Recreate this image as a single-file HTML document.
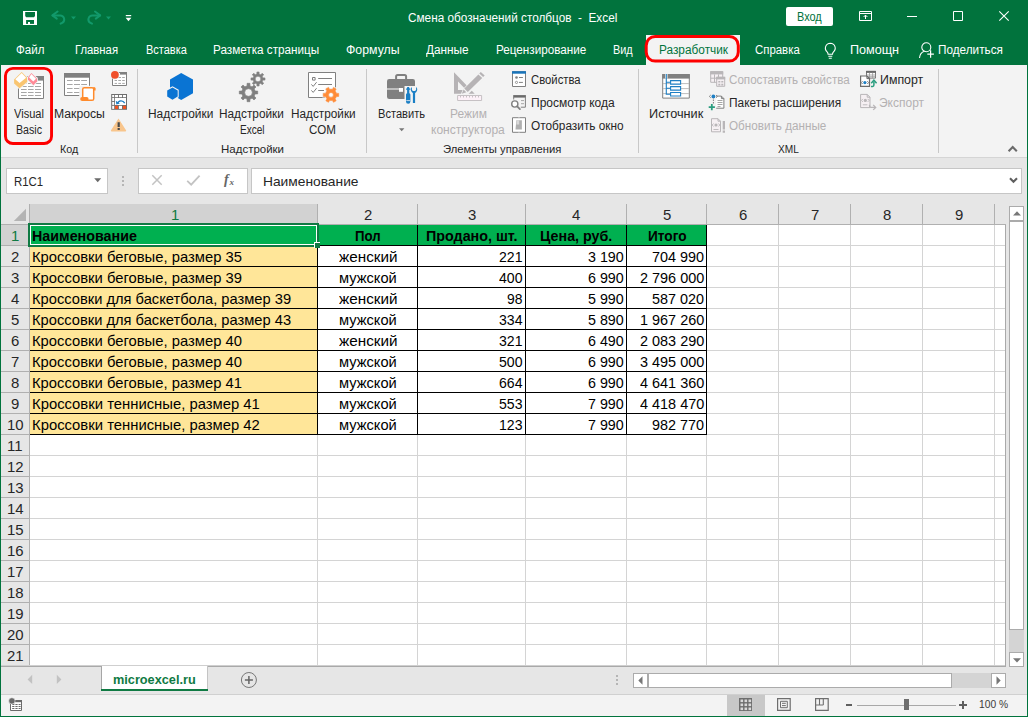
<!DOCTYPE html>
<html lang="ru"><head><meta charset="utf-8"><title>Смена обозначений столбцов - Excel</title>
<style>
html,body{margin:0;padding:0;background:#e6e6e6;overflow:hidden}
#app{position:relative;width:1028px;height:717px;overflow:hidden;background:#e6e6e6;font-family:"Liberation Sans",sans-serif}
#app div,#app svg,#app span.t{position:absolute}
#app span.t{white-space:pre;transform-origin:0 0;display:block}
#app svg{overflow:visible}
</style></head><body><div id="app">
<div style="left:0px;top:0px;width:1028px;height:65px;background:#01733d;"></div>
<div style="left:646px;top:35px;width:94px;height:30px;background:#f3f3f3;"></div>
<div style="left:1px;top:65px;width:1026px;height:92px;background:#f3f3f3;"></div>
<div style="left:1px;top:157px;width:1026px;height:1px;background:#d5d5d5;"></div>
<div style="left:0px;top:65px;width:1px;height:652px;background:#01733d;"></div>
<div style="left:1027px;top:65px;width:1px;height:652px;background:#01733d;"></div>
<div style="left:0px;top:716px;width:1028px;height:1px;background:#01733d;"></div>
<svg style="left:23px;top:11px" width="14" height="14" viewBox="0 0 14 14"><path d="M0 0h14v14h-14z" fill="#fff"/>
<path d="M2.200 1h9.800v4l-1 1.200h-7.800l-1-1.200z" fill="#01733d"/><path d="M3.100 9h7.900v3.900h-7.900z" fill="#01733d"/><path d="M5 11h2v2h-2z" fill="#fff"/></svg>
<svg style="left:50px;top:10px" width="18" height="16" viewBox="0 0 18 16"><path d="M2.600 5.400H10.300a4 4 0 0 1 2.300 7.200L10.600 13.600" fill="none" stroke="#12996b" stroke-width="2" stroke-linecap="round" stroke-linejoin="round"/><path d="M7.600 1.500L2.400 5.400L6.800 8.600" fill="none" stroke="#12996b" stroke-width="2" stroke-linecap="round" stroke-linejoin="round"/></svg>
<svg style="left:71px;top:15.5px" width="6" height="4" viewBox="0 0 6 4"><path d="M0 0.400h5L2.500 3.500z" fill="#12996b"/></svg>
<svg style="left:85px;top:10px" width="18" height="16" viewBox="0 0 18 16"><g transform="translate(17.600,0) scale(-1,1)"><path d="M2.600 5.400H10.300a4 4 0 0 1 2.300 7.200L10.600 13.600" fill="none" stroke="#12996b" stroke-width="2" stroke-linecap="round" stroke-linejoin="round"/><path d="M7.600 1.500L2.400 5.400L6.800 8.600" fill="none" stroke="#12996b" stroke-width="2" stroke-linecap="round" stroke-linejoin="round"/></g></svg>
<svg style="left:106px;top:15.5px" width="6" height="4" viewBox="0 0 6 4"><path d="M0 0.400h5L2.500 3.500z" fill="#12996b"/></svg>
<svg style="left:125px;top:14px" width="8" height="8" viewBox="0 0 8 8"><path d="M0.8 1h5.4v1.2h-5.4z" fill="#fff"/><path d="M0.6 3.7h5.8L3.5 7.2z" fill="#fff"/></svg>
<span class="t" style="left:408.30px;top:11px;font-size:12.5px;line-height:14px;height:14px;color:#fff;transform:scaleX(0.9423);">Смена обозначений столбцов  -  Excel</span>
<div style="left:786px;top:7px;width:47px;height:19px;background:#fff;border-radius:2px;"></div>
<span class="t" style="left:796.90px;top:10px;font-size:12.5px;line-height:14px;height:14px;color:#01733d;transform:scaleX(0.8743);">Вход</span>
<svg style="left:859px;top:11px" width="13" height="10" viewBox="0 0 13 10"><path d="M0.5 0.5h12v9h-12z" fill="none" stroke="#fff" stroke-width="1"/><path d="M0.5 2.5h12" stroke="#fff" stroke-width="1"/>
<path d="M6.5 8V4.2M4.6 6L6.5 4.1 8.4 6" fill="none" stroke="#fff" stroke-width="1"/></svg>
<div style="left:907px;top:16px;width:10px;height:1px;background:#fff;"></div>
<svg style="left:953px;top:11px" width="10" height="10" viewBox="0 0 10 10"><path d="M0.5 0.5h9v9h-9z" fill="none" stroke="#fff" stroke-width="1"/></svg>
<svg style="left:999px;top:11px" width="10" height="10" viewBox="0 0 10 10"><path d="M0.3 0.3L9.7 9.7M9.7 0.3L0.3 9.7" stroke="#fff" stroke-width="1.1"/></svg>
<span class="t" style="left:16.40px;top:43px;font-size:12.5px;line-height:14px;height:14px;color:#fff;transform:scaleX(0.9236);">Файл</span>
<span class="t" style="left:74.60px;top:43px;font-size:12.5px;line-height:14px;height:14px;color:#fff;transform:scaleX(0.9041);">Главная</span>
<span class="t" style="left:145.70px;top:43px;font-size:12.5px;line-height:14px;height:14px;color:#fff;transform:scaleX(0.8796);">Вставка</span>
<span class="t" style="left:213.20px;top:43px;font-size:12.5px;line-height:14px;height:14px;color:#fff;transform:scaleX(0.9367);">Разметка страницы</span>
<span class="t" style="left:346.20px;top:43px;font-size:12.5px;line-height:14px;height:14px;color:#fff;transform:scaleX(0.9857);">Формулы</span>
<span class="t" style="left:426.20px;top:43px;font-size:12.5px;line-height:14px;height:14px;color:#fff;transform:scaleX(0.9450);">Данные</span>
<span class="t" style="left:495.70px;top:43px;font-size:12.5px;line-height:14px;height:14px;color:#fff;transform:scaleX(0.9358);">Рецензирование</span>
<span class="t" style="left:612.60px;top:43px;font-size:12.5px;line-height:14px;height:14px;color:#fff;transform:scaleX(0.8707);">Вид</span>
<span class="t" style="left:754.50px;top:43px;font-size:12.5px;line-height:14px;height:14px;color:#fff;transform:scaleX(0.9131);">Справка</span>
<span class="t" style="left:849.90px;top:43px;font-size:12.5px;line-height:14px;height:14px;color:#fff;transform:scaleX(1.0085);">Помощн</span>
<span class="t" style="left:937.60px;top:43px;font-size:12.5px;line-height:14px;height:14px;color:#fff;transform:scaleX(0.9406);">Поделиться</span>
<span class="t" style="left:658.80px;top:43px;font-size:12.5px;line-height:14px;height:14px;color:#01733d;transform:scaleX(0.9466);">Разработчик</span>
<svg style="left:640px;top:30px" width="104" height="36" viewBox="640 30 104 36"><rect x="646.2" y="36.4" width="92.1" height="24.7" rx="9" fill="none" stroke="#fe0000" stroke-width="3"/></svg>
<svg style="left:824px;top:41.6px" width="13" height="18" viewBox="0 0 13 18"><path d="M6.3 1.2a4.9 4.9 0 0 1 3.2 8.6c-.8.8-1 1.4-1 2.4H4.1c0-1-.2-1.600-1-2.400A4.9 4.9 0 0 1 6.300 1.200z" fill="none" stroke="#fff" stroke-width="1.1"/>
<path d="M4.300 14.200h4M4.800 16.200h3" stroke="#fff" stroke-width="1.1"/></svg>
<svg style="left:919px;top:41px" width="16" height="18" viewBox="0 0 16 18"><circle cx="7.300" cy="6.200" r="4.500" fill="none" stroke="#fff" stroke-width="1.100"/>
<path d="M0.500 17c.3-3.800 2.300-6 5-6.800" fill="none" stroke="#fff" stroke-width="1.100"/>
<path d="M11.600 9.300v7.400M8.300 13.100h6.600" stroke="#fff" stroke-width="1.200"/></svg>
<div style="left:137px;top:69px;width:1px;height:84px;background:#c8c8c8;"></div>
<div style="left:366px;top:69px;width:1px;height:84px;background:#c8c8c8;"></div>
<div style="left:638px;top:69px;width:1px;height:84px;background:#c8c8c8;"></div>
<div style="left:938px;top:69px;width:1px;height:84px;background:#c8c8c8;"></div>
<svg style="left:0;top:0" width="1028" height="160" viewBox="0 0 1028 160"><path d="M18.5 76.500h25v22h-25z" fill="#fff" stroke="#808080" stroke-width="1"/><path d="M37.300 76h6.700v4.600h-6.700z" fill="#808080"/><path d="M21 83.5H26.7" stroke="#a6a6a6" stroke-width="1"/><path d="M28 83.5H33.6" stroke="#a6a6a6" stroke-width="1"/><path d="M35 83.5H41" stroke="#a6a6a6" stroke-width="1"/><path d="M21 86.5H26.7" stroke="#a6a6a6" stroke-width="1"/><path d="M28 86.5H33.6" stroke="#a6a6a6" stroke-width="1"/><path d="M35 86.5H41" stroke="#a6a6a6" stroke-width="1"/><path d="M21 89.5H26.7" stroke="#a6a6a6" stroke-width="1"/><path d="M28 89.5H33.6" stroke="#a6a6a6" stroke-width="1"/><path d="M35 89.5H41" stroke="#a6a6a6" stroke-width="1"/><path d="M21 92.5H26.7" stroke="#a6a6a6" stroke-width="1"/><path d="M28 92.5H33.6" stroke="#a6a6a6" stroke-width="1"/><path d="M35 92.5H41" stroke="#a6a6a6" stroke-width="1"/><path d="M21 95.5H26.7" stroke="#a6a6a6" stroke-width="1"/><path d="M28 95.5H33.6" stroke="#a6a6a6" stroke-width="1"/><path d="M35 95.5H41" stroke="#a6a6a6" stroke-width="1"/><path d="M21.700 71.900L27.200 77.800V82L19.500 88.300L14.100 83.500V79.400z" fill="#f3f3f3" stroke="#f3f3f3" stroke-width="1.600" stroke-linejoin="round"/><path d="M21.700 71.900L27.200 77.800V82L19.500 88.300L14.100 83.500V79.400z" fill="#f9c571"/><path d="M21.700 73.100L26.100 77.800L19.600 83.100L15.300 79.300z" fill="#fff"/><path d="M31.400 72.900L37.100 78.800V81.300L33.400 85.200L28 79.800V77.300z" fill="#f3f3f3" stroke="#f3f3f3" stroke-width="1.600" stroke-linejoin="round"/><path d="M31.400 72.900L37.100 78.800V81.300L33.400 85.200L28 79.800V77.300z" fill="#ff8b98"/><path d="M31.400 74.100L36 78.800L33.300 81.500L29.100 77.400z" fill="#fff"/><path d="M64.500 73.500h25v22h-25z" fill="#fff" stroke="#808080" stroke-width="1"/><path d="M64 73h26v4.700h-26z" fill="#808080"/><path d="M67 80.5H72.6" stroke="#a6a6a6" stroke-width="1"/><path d="M74 80.5H80" stroke="#a6a6a6" stroke-width="1"/><path d="M81.2 80.5H87" stroke="#a6a6a6" stroke-width="1"/><path d="M67 84.5H72.6" stroke="#a6a6a6" stroke-width="1"/><path d="M74 84.5H80" stroke="#a6a6a6" stroke-width="1"/><path d="M81.2 84.5H87" stroke="#a6a6a6" stroke-width="1"/><path d="M67 88.5H72.6" stroke="#a6a6a6" stroke-width="1"/><path d="M74 88.5H80" stroke="#a6a6a6" stroke-width="1"/><path d="M81.2 88.5H87" stroke="#a6a6a6" stroke-width="1"/><path d="M67 92.5H72.6" stroke="#a6a6a6" stroke-width="1"/><path d="M74 92.5H80" stroke="#a6a6a6" stroke-width="1"/><path d="M81.2 92.5H87" stroke="#a6a6a6" stroke-width="1"/><path d="M79.200 85.800h17v16.200h-17z" fill="#f3f3f3"/><rect x="82.700" y="87.700" width="11" height="12.600" rx="1.600" fill="#fff" stroke="#ff8b2c" stroke-width="1.500"/><path d="M93.400 87h.6a1.600 1.600 0 0 1 1.600 1.600v1.900h-2.200z" fill="#ff8b2c"/><rect x="80.200" y="97.100" width="8.400" height="3.900" rx="1.900" fill="#ff8b2c"/><path d="M112.500 72.500h14v13h-14z" fill="#fff" stroke="#808080" stroke-width="1"/><path d="M120 72h7v2.600h-7z" fill="#808080"/><path d="M114.6 77.5H117" stroke="#a6a6a6" stroke-width="1"/><path d="M118.3 77.5H121" stroke="#a6a6a6" stroke-width="1"/><path d="M122.2 77.5H124.8" stroke="#a6a6a6" stroke-width="1"/><path d="M114.6 80.5H117" stroke="#a6a6a6" stroke-width="1"/><path d="M118.3 80.5H121" stroke="#a6a6a6" stroke-width="1"/><path d="M122.2 80.5H124.8" stroke="#a6a6a6" stroke-width="1"/><path d="M114.6 83.4H117" stroke="#a6a6a6" stroke-width="1"/><path d="M118.3 83.4H121" stroke="#a6a6a6" stroke-width="1"/><path d="M122.2 83.4H124.8" stroke="#a6a6a6" stroke-width="1"/><circle cx="114.900" cy="74.800" r="4.600" fill="#f3f3f3"/><circle cx="114.900" cy="74.800" r="3.900" fill="#f0502b"/><path d="M111.200 94h15.800v15.800h-15.800z" fill="#6e6e6e"/><path d="M112.2 95H114.2V97.2H112.2z" fill="#fff"/><path d="M112.2 98H114.2V101H112.2z" fill="#fff"/><path d="M112.2 101.9H114.2V104.9H112.2z" fill="#fff"/><path d="M112.2 105.8H114.2V108.9H112.2z" fill="#fff"/><path d="M115 95H118V97.2H115z" fill="#fff"/><path d="M115 98H118V101H115z" fill="#fff"/><path d="M115 101.9H118V104.9H115z" fill="#fff"/><path d="M115 105.8H118V108.9H115z" fill="#f4511e"/><path d="M118.9 95H122V97.2H118.9z" fill="#fff"/><path d="M118.9 98H122V101H118.9z" fill="#fff"/><path d="M118.9 101.9H122V104.9H118.9z" fill="#fff"/><path d="M118.9 105.8H122V108.9H118.9z" fill="#fff"/><path d="M122.9 95H126V97.2H122.9z" fill="#fff"/><path d="M122.9 98H126V101H122.9z" fill="#fff"/><path d="M122.9 101.9H126V104.9H122.9z" fill="#fff"/><path d="M122.9 105.8H126V108.9H122.9z" fill="#f4511e"/><path d="M115 98h11v7h-11z" fill="#fff"/><path d="M117.500 103.600c.8-3.200 5.400-3.800 7.200-.4" fill="none" stroke="#1e7fc4" stroke-width="1.400"/><path d="M115.800 100.800l.5 3.800 3.600-1.200z" fill="#1e7fc4"/><path d="M118.500 118.600L126 130.200a.8.800 0 0 1 -.7 1.300h-13.600a.8.800 0 0 1 -.7 -1.300z" fill="#f8c58c"/><path d="M117.600 122.200h2.200v4.900h-2.200zM117.600 128.100h2.200v2h-2.200z" fill="#4a4a4a"/><path d="M181.200 73L193 79.600V93.300L181.200 100L170 93.300V79.600z" fill="#0a74d3"/><path d="M172.500 86.200L178.700 89.800V97.200L172.500 100.800L166.200 97.200V89.800z" fill="#f3f3f3"/><path d="M172.500 87.400L177.700 90.400V96.600L172.500 99.700L167.200 96.600V90.400z" fill="#0a74d3"/><path d="M254.76 90.10 L255.04 91.06 L257.69 91.06 L257.69 93.94 L255.04 93.94 L254.62 95.23 L254.14 96.11 L256.02 97.98 L253.98 100.02 L252.11 98.14 L250.90 98.76 L249.94 99.04 L249.94 101.69 L247.06 101.69 L247.06 99.04 L245.77 98.62 L244.89 98.14 L243.02 100.02 L240.98 97.98 L242.86 96.11 L242.24 94.90 L241.96 93.94 L239.31 93.94 L239.31 91.06 L241.96 91.06 L242.38 89.77 L242.86 88.89 L240.98 87.02 L243.02 84.98 L244.89 86.86 L246.10 86.24 L247.06 85.96 L247.06 83.31 L249.94 83.31 L249.94 85.96 L251.23 86.38 L252.11 86.86 L253.98 84.98 L256.02 87.02 L254.14 88.89Z M252.30 92.50 A3.8 3.8 0 1 0 244.70 92.50 A3.8 3.8 0 1 0 252.30 92.50Z" fill="#808080" fill-rule="evenodd" stroke="#808080" stroke-width="0.6" stroke-linejoin="round"/><path d="M262.67 77.21 L262.88 77.93 L265.01 77.90 L265.01 80.10 L262.88 80.07 L262.57 81.04 L262.21 81.70 L263.74 83.18 L262.18 84.74 L260.70 83.21 L259.79 83.67 L259.07 83.88 L259.10 86.01 L256.90 86.01 L256.93 83.88 L255.96 83.57 L255.30 83.21 L253.82 84.74 L252.26 83.18 L253.79 81.70 L253.33 80.79 L253.12 80.07 L250.99 80.10 L250.99 77.90 L253.12 77.93 L253.43 76.96 L253.79 76.30 L252.26 74.82 L253.82 73.26 L255.30 74.79 L256.21 74.33 L256.93 74.12 L256.90 71.99 L259.10 71.99 L259.07 74.12 L260.04 74.43 L260.70 74.79 L262.18 73.26 L263.74 74.82 L262.21 76.30Z M260.80 79.00 A2.8 2.8 0 1 0 255.20 79.00 A2.8 2.8 0 1 0 260.80 79.00Z" fill="#808080" fill-rule="evenodd" stroke="#808080" stroke-width="0.6" stroke-linejoin="round"/><path d="M308.500 72.500h27v25h-27z" fill="#fff" stroke="#808080" stroke-width="1"/><path d="M312.500 77.500h2.600v2.600h-2.600z" fill="#fff" stroke="#808080" stroke-width="1"/><path d="M318.200 78.500H332M318.200 84.500H332M318.200 90.500H324" stroke="#808080" stroke-width="1"/><path d="M311.400 84.400l1.800 2 3.400-4.200M311.400 90.400l1.800 2 3.400-4.200" fill="none" stroke="#808080" stroke-width="1"/><path d="M335.95 92.28 L336.39 93.39 L338.65 93.38 L338.65 96.42 L336.39 96.41 L335.74 97.88 L335.00 98.82 L336.14 100.77 L333.51 102.29 L332.39 100.32 L330.79 100.50 L329.61 100.32 L328.49 102.29 L325.86 100.77 L327.00 98.82 L326.05 97.52 L325.61 96.41 L323.35 96.42 L323.35 93.38 L325.61 93.39 L326.26 91.92 L327.00 90.98 L325.86 89.03 L328.49 87.51 L329.61 89.48 L331.21 89.30 L332.39 89.48 L333.51 87.51 L336.14 89.03 L335.00 90.98Z M333.50 94.90 A2.5 2.5 0 1 0 328.50 94.90 A2.5 2.5 0 1 0 333.50 94.90Z" fill="#f3f3f3" stroke="#f3f3f3" stroke-width="2.4" stroke-linejoin="round"/><path d="M335.95 92.28 L336.39 93.39 L338.65 93.38 L338.65 96.42 L336.39 96.41 L335.74 97.88 L335.00 98.82 L336.14 100.77 L333.51 102.29 L332.39 100.32 L330.79 100.50 L329.61 100.32 L328.49 102.29 L325.86 100.77 L327.00 98.82 L326.05 97.52 L325.61 96.41 L323.35 96.42 L323.35 93.38 L325.61 93.39 L326.26 91.92 L327.00 90.98 L325.86 89.03 L328.49 87.51 L329.61 89.48 L331.21 89.30 L332.39 89.48 L333.51 87.51 L336.14 89.03 L335.00 90.98Z M333.50 94.90 A2.5 2.5 0 1 0 328.50 94.90 A2.5 2.5 0 1 0 333.50 94.90Z" fill="#ff8c38" fill-rule="evenodd" stroke="#ff8c38" stroke-width="0.6" stroke-linejoin="round"/><path d="M396.100 79.500v-3a1.500 1.500 0 0 1 1.500-1.500h7a1.500 1.500 0 0 1 1.500 1.500v3" fill="none" stroke="#808080" stroke-width="2"/><rect x="387" y="79" width="28" height="20" rx="2.200" fill="#808080"/><path d="M387 88.500h13v1h-13z" fill="#fff"/><path d="M399 88h4v3.800h-4z" fill="#fff"/><path d="M404.500 86h14v18h-14z" fill="#f3f3f3"/><path d="M407.300 87h1.700l.5 1.500h.8v1.200h-1v3.500c.9.300 1.100.9 1.100 1.800v6.500a2 2 0 0 1 -4.400 0v-6.500c0-.900.200-1.500 1.100-1.800v-3.500h-1v-1.200h.8z" fill="#1a7fc5"/><path d="M406.300 100.600h3.800" stroke="#f3f3f3" stroke-width=".8"/><path d="M411.300 87.600c-.9 1.500-.7 3.400 .6 4.600l1 .7v10h2.200v-10l1-.7c1.300-1.200 1.500-3.100 .6-4.600l-.6-.3v2.800l-1.100 .9h-2l-1.100-.9v-2.800z" fill="#1a7fc5"/><path d="M399 128.200h5.400L401.700 131.200z" fill="#777"/><path d="M454 72.200V93.800H474.700zM458 81.500L466.200 90H458z" fill="#b6b3b5" fill-rule="evenodd"/><path d="M460.300 95.200L463.200 88.800L480.600 71.300L486.300 76.300L468.500 94z" fill="#f3f3f3"/><path d="M461.800 93.800L463.600 89.500L466.300 92.200zM464.300 88.500L478.400 74.400L482.200 78L467.800 92zM479.300 73.500L480.800 72.100L484.700 75.600L483.100 77.100z" fill="#b6b3b5"/><path d="M457.600 95.500h24v5h-24z" fill="#fdf1f8" stroke="#c6c1c4" stroke-width="1"/><path d="M460.500 95.500v2M463.500 95.500v2M466.500 95.500v2M469.500 95.500v2M472.500 95.500v2M475.500 95.500v2M478.500 95.500v2" stroke="#c6c1c4" stroke-width="1"/><path d="M512.500 71.700h13v14.800h-13z" fill="#fff" stroke="#808080" stroke-width="1"/><path d="M512 71.200h14v2.500h-14z" fill="#1a75bb"/><circle cx="516.500" cy="77.500" r="1.300" fill="#808080"/><path d="M519 77.500h3.900M519 82.400h3.900" stroke="#808080" stroke-width="1"/><circle cx="516.500" cy="82.400" r="1.100" fill="#fff" stroke="#808080" stroke-width=".8"/><path d="M513.200 95.100h12.700v2.500h-12.700z" fill="#6a6a6a"/><path d="M525.400 97v10.200h-4.600M513.700 97v2.500" fill="none" stroke="#808080" stroke-width="1"/><path d="M521 100.600h3M521 103.700h3" stroke="#a6a6a6" stroke-width="1"/><circle cx="514.800" cy="104" r="3.100" fill="#fff" stroke="#808080" stroke-width="1.400"/><path d="M517.200 106.400l2.700 2.700" stroke="#808080" stroke-width="1.800" stroke-linecap="round"/><path d="M512.500 117.700h13v14.600h-13z" fill="#fff" stroke="#808080" stroke-width="1"/><path d="M518.600 117.700h.8M518.600 132.300h.8" stroke="#e8e8e8" stroke-width="1"/><path d="M516.400 120.200h5.500v9.300h-6.400z" fill="#b0b0b0"/><path d="M516.800 120.200h2.400v4.300h-2.800z" fill="#d9d9d9"/><path d="M662.700 74.500h26.600v23.600h-26.600z" fill="#fff" stroke="#808080" stroke-width="1"/><path d="M662.200 74h27.600v4.600h-27.600z" fill="#808080"/><path d="M665.200 74h2.300v4.600h-2.300z" fill="#fff"/><path d="M663 83.600h26M663 88.600h26M663 93.600h26" stroke="#bdbdbd" stroke-width="1"/><path d="M666.300 74V94.300H670.600M666.300 88.300H670.600M666.300 82.300H670.600" fill="none" stroke="#1e7fc4" stroke-width="1.100"/><path d="M670.600 80.6h10v3.500h-10z" fill="#fff" stroke="#1e7fc4" stroke-width="1.100"/><path d="M670.600 86.6h10v3.500h-10z" fill="#fff" stroke="#1e7fc4" stroke-width="1.100"/><path d="M670.600 92.5h10v3.500h-10z" fill="#fff" stroke="#1e7fc4" stroke-width="1.100"/><path d="M710.700 71.700h12v10.600h-12z" fill="#f6f0f3" stroke="#b9b6b8" stroke-width="1"/><path d="M710.200 71.200h13v3.200h-13z" fill="#b9b6b8"/><path d="M714.500 74.400v8M718.500 74.400v8M710.700 78.200h12" stroke="#b9b6b8" stroke-width="1"/><path d="M716.700 77.300h8v9h-8z" fill="#f6f0f3" stroke="#b9b6b8" stroke-width="1"/><path d="M716.200 76.800h9v2.600h-9z" fill="#b9b6b8"/><path d="M718.300 81h2v1.600h-2zM721.300 81h2v1.600h-2zM718.300 83.800h2v1.600h-2zM721.300 83.800h2v1.600h-2z" fill="#b9b6b8"/><path d="M716.200 96.100h5.200l2.500 2.500v9.600h-7.700" fill="#fff" stroke="#808080" stroke-width="1"/><path d="M721.400 96.100v2.500h2.500" fill="none" stroke="#808080" stroke-width="1"/><path d="M717.500 100.500h5M717.500 102.500h5M717.500 104.500h5M717.500 106.500h3" stroke="#a6a6a6" stroke-width="1"/><path d="M713.400 97v7" stroke="#808080" stroke-width="1" stroke-dasharray="1.500 1"/><circle cx="713.400" cy="96.400" r="1.900" fill="#1e7fc4"/><path d="M710.800 95l-1.500 1.400 1.500 1.400M716 95l1.500 1.400-1.500 1.400" fill="none" stroke="#808080" stroke-width=".9"/><path d="M710.900 104.100h1.800v2.200h2.200v1.800h-2.200v2.200h-1.800v-2.200h-2.200v-1.800h2.200z" fill="#2a9d7f"/><path d="M711.500 118.700h6.500l2.500 2.500v10.600h-9z" fill="#f6f0f3" stroke="#b9b6b8" stroke-width="1"/><path d="M718 118.700v2.500h2.500" fill="none" stroke="#b9b6b8" stroke-width="1"/><circle cx="716" cy="125" r="1.600" fill="#b9b6b8"/><path d="M713.600 123.500l-1.400 1.500 1.400 1.500M718.400 123.500l1.400 1.500-1.400 1.500M713.500 129.500h5" fill="none" stroke="#b9b6b8" stroke-width=".9"/><path d="M722.700 121h2.300v8.400h-2.300zM722.700 130.600h2.300v2.200h-2.300z" fill="#b9b6b8"/><path d="M866.500 71.400h9v6.700h-9z" fill="#fff" stroke="#777" stroke-width="1"/><path d="M866 70.900h10v2h-10z" fill="#6a6a6a"/><path d="M869.500 72.900v5.200M872.600 72.900v5.200M866.500 75h9M866.500 76.700h9" stroke="#9a9a9a" stroke-width=".8"/><path d="M860.600 76h6.300l2.600 2.600v7.700h-8.900z" fill="#fff" stroke="#6a6a6a" stroke-width="1.200"/><path d="M866.900 76v2.600h2.600" fill="none" stroke="#6a6a6a" stroke-width="1"/><circle cx="864.900" cy="82.600" r="1.600" fill="#1e7fc4"/><path d="M862.600 81.200l-1.300 1.400 1.300 1.400M867.300 81.200l1.300 1.400-1.300 1.400" fill="none" stroke="#6a6a6a" stroke-width=".9"/><path d="M871 86.400h1.600a1.300 1.300 0 0 0 1.300-1.300v-3.600" fill="none" stroke="#2a9d7f" stroke-width="1.500"/><path d="M871.200 83.200l2.700-3 2.700 3" fill="none" stroke="#2a9d7f" stroke-width="1.500"/><path d="M860.600 94.400h6.600l2.800 2.800v10.400h-9.400z" fill="#f6f0f3" stroke="#b9b6b8" stroke-width="1"/><path d="M867.200 94.400v2.800h2.800" fill="none" stroke="#b9b6b8" stroke-width="1"/><circle cx="865.300" cy="100.400" r="1.600" fill="#b9b6b8"/><path d="M862.900 98.900l-1.400 1.500 1.400 1.500M867.700 98.900l1.400 1.500-1.400 1.500M862.800 104.800h4.600" fill="none" stroke="#b9b6b8" stroke-width=".9"/><path d="M869.500 104.700v1.400a1.300 1.300 0 0 0 1.300 1.300h4.400M873.200 104.900l2.500 2.500-2.500 2.500" fill="none" stroke="#b9b6b8" stroke-width="1.300"/><path d="M1008.600 151.200L1012.700 147.100L1016.800 151.200" fill="none" stroke="#6a6a6a" stroke-width="2.100"/></svg>
<svg style="left:0;top:60px" width="60" height="90" viewBox="0 60 60 90"><rect x="5.45" y="68.35" width="46.1" height="75.2" rx="7.4" fill="none" stroke="#fe0000" stroke-width="2.9"/></svg>
<span class="t" style="left:14.40px;top:107px;font-size:12.5px;line-height:14px;height:14px;color:#262626;transform:scaleX(0.8872);">Visual</span>
<span class="t" style="left:16.40px;top:123px;font-size:12.5px;line-height:14px;height:14px;color:#262626;transform:scaleX(0.8507);">Basic</span>
<span class="t" style="left:53.70px;top:107px;font-size:12.5px;line-height:14px;height:14px;color:#262626;transform:scaleX(0.9765);">Макросы</span>
<span class="t" style="left:148.30px;top:107px;font-size:12.5px;line-height:14px;height:14px;color:#262626;transform:scaleX(0.9524);">Надстройки</span>
<span class="t" style="left:219.40px;top:107px;font-size:12.5px;line-height:14px;height:14px;color:#262626;transform:scaleX(0.9451);">Надстройки</span>
<span class="t" style="left:239.60px;top:123px;font-size:12.5px;line-height:14px;height:14px;color:#262626;transform:scaleX(0.8049);">Excel</span>
<span class="t" style="left:290.60px;top:107px;font-size:12.5px;line-height:14px;height:14px;color:#262626;transform:scaleX(0.9422);">Надстройки</span>
<span class="t" style="left:309.40px;top:123px;font-size:12.5px;line-height:14px;height:14px;color:#262626;transform:scaleX(0.9251);">COM</span>
<span class="t" style="left:377.70px;top:107px;font-size:12.5px;line-height:14px;height:14px;color:#262626;transform:scaleX(0.8887);">Вставить</span>
<span class="t" style="left:449.90px;top:107px;font-size:12.5px;line-height:14px;height:14px;color:#b3b1b2;transform:scaleX(0.9569);">Режим</span>
<span class="t" style="left:430.70px;top:123px;font-size:12.5px;line-height:14px;height:14px;color:#b3b1b2;transform:scaleX(0.9644);">конструктора</span>
<span class="t" style="left:648.90px;top:107px;font-size:12.5px;line-height:14px;height:14px;color:#262626;transform:scaleX(1.0161);">Источник</span>
<span class="t" style="left:530.80px;top:73px;font-size:12.5px;line-height:14px;height:14px;color:#262626;transform:scaleX(0.9047);">Свойства</span>
<span class="t" style="left:531.00px;top:96px;font-size:12.5px;line-height:14px;height:14px;color:#262626;transform:scaleX(0.9607);">Просмотр кода</span>
<span class="t" style="left:531.00px;top:119px;font-size:12.5px;line-height:14px;height:14px;color:#262626;transform:scaleX(0.9461);">Отобразить окно</span>
<span class="t" style="left:728.80px;top:73px;font-size:12.5px;line-height:14px;height:14px;color:#b3b1b2;transform:scaleX(0.9292);">Сопоставить свойства</span>
<span class="t" style="left:729.20px;top:96px;font-size:12.5px;line-height:14px;height:14px;color:#262626;transform:scaleX(0.9508);">Пакеты расширения</span>
<span class="t" style="left:728.80px;top:119px;font-size:12.5px;line-height:14px;height:14px;color:#b3b1b2;transform:scaleX(0.9350);">Обновить данные</span>
<span class="t" style="left:879.70px;top:73px;font-size:12.5px;line-height:14px;height:14px;color:#262626;transform:scaleX(0.9888);">Импорт</span>
<span class="t" style="left:878.90px;top:96px;font-size:12.5px;line-height:14px;height:14px;color:#b3b1b2;transform:scaleX(0.9587);">Экспорт</span>
<span class="t" style="left:59.70px;top:143px;font-size:11.5px;line-height:12px;height:12px;color:#262626;transform:scaleX(0.9361);">Код</span>
<span class="t" style="left:220.50px;top:143px;font-size:11.5px;line-height:12px;height:12px;color:#262626;transform:scaleX(0.9988);">Надстройки</span>
<span class="t" style="left:443.30px;top:143px;font-size:11.5px;line-height:12px;height:12px;color:#262626;transform:scaleX(0.9769);">Элементы управления</span>
<span class="t" style="left:778.00px;top:143px;font-size:11.5px;line-height:12px;height:12px;color:#262626;transform:scaleX(0.8801);">XML</span>
<div style="left:6px;top:168px;width:100px;height:24px;background:#fff;border:1px solid #c6c6c6"></div>
<span class="t" style="left:13.50px;top:175px;font-size:12.5px;line-height:14px;height:14px;color:#262626;transform:scaleX(0.9143);">R1C1</span>
<svg style="left:94px;top:178px" width="8" height="5" viewBox="0 0 8 5"><path d="M0.2 0.3h7L3.7 4.3z" fill="#6a6a6a"/></svg>
<div style="left:122px;top:176px;width:2px;height:2px;background:#b5b5b5;"></div>
<div style="left:122px;top:180px;width:2px;height:2px;background:#b5b5b5;"></div>
<div style="left:122px;top:184px;width:2px;height:2px;background:#b5b5b5;"></div>
<div style="left:138px;top:168px;width:108px;height:24px;background:#fff;border:1px solid #c6c6c6"></div>
<svg style="left:151px;top:174px" width="12" height="12" viewBox="0 0 12 12"><path d="M1.300 1.300L10.700 10.700M10.700 1.300L1.300 10.700" stroke="#c3c3c3" stroke-width="1.500"/></svg>
<svg style="left:186px;top:174px" width="15" height="12" viewBox="0 0 15 12"><path d="M1.200 6.800L5.200 10.600L13.600 1.600" fill="none" stroke="#c3c3c3" stroke-width="1.800"/></svg>
<span class="t" style="left:224px;top:172px;font-family:'Liberation Serif',serif;font-style:italic;font-size:14px;line-height:16px;color:#666;font-weight:bold">f</span>
<span class="t" style="left:229.500px;top:177px;font-family:'Liberation Serif',serif;font-style:italic;font-size:9px;line-height:10px;color:#666;font-weight:bold">x</span>
<div style="left:251px;top:168px;width:769px;height:24px;background:#fff;border:1px solid #c6c6c6"></div>
<span class="t" style="left:262.80px;top:174px;font-size:13.6px;line-height:15px;height:15px;color:#262626;transform:scaleX(1.0133);">Наименование</span>
<svg style="left:1009px;top:177px" width="10" height="7" viewBox="0 0 10 7"><path d="M1 1.300L4.500 4.800L8 1.300" fill="none" stroke="#5f5f5f" stroke-width="2.100"/></svg>
<div style="left:30px;top:225px;width:975px;height:440px;background:#fff;"></div>
<div style="left:30px;top:204px;width:287px;height:20px;background:#d2d2d2;"></div>
<div style="left:1px;top:225px;width:28px;height:441px;background:#e6e6e6;"></div>
<div style="left:1px;top:225px;width:28px;height:20px;background:#d2d2d2;"></div>
<div style="left:29px;top:204px;width:1px;height:21px;background:#b0b0b0;"></div>
<div style="left:317px;top:204px;width:1px;height:21px;background:#b0b0b0;"></div>
<div style="left:417px;top:204px;width:1px;height:21px;background:#b0b0b0;"></div>
<div style="left:525px;top:204px;width:1px;height:21px;background:#b0b0b0;"></div>
<div style="left:626px;top:204px;width:1px;height:21px;background:#b0b0b0;"></div>
<div style="left:706px;top:204px;width:1px;height:21px;background:#b0b0b0;"></div>
<div style="left:778px;top:204px;width:1px;height:21px;background:#b0b0b0;"></div>
<div style="left:850px;top:204px;width:1px;height:21px;background:#b0b0b0;"></div>
<div style="left:922px;top:204px;width:1px;height:21px;background:#b0b0b0;"></div>
<div style="left:994px;top:204px;width:1px;height:21px;background:#b0b0b0;"></div>
<div style="left:1px;top:224px;width:1005px;height:1px;background:#b0b0b0;"></div>
<div style="left:29px;top:225px;width:1px;height:441px;background:#b0b0b0;"></div>
<div style="left:1px;top:245px;width:28px;height:1px;background:#b0b0b0;"></div>
<div style="left:1px;top:266px;width:28px;height:1px;background:#b0b0b0;"></div>
<div style="left:1px;top:287px;width:28px;height:1px;background:#b0b0b0;"></div>
<div style="left:1px;top:308px;width:28px;height:1px;background:#b0b0b0;"></div>
<div style="left:1px;top:329px;width:28px;height:1px;background:#b0b0b0;"></div>
<div style="left:1px;top:350px;width:28px;height:1px;background:#b0b0b0;"></div>
<div style="left:1px;top:371px;width:28px;height:1px;background:#b0b0b0;"></div>
<div style="left:1px;top:392px;width:28px;height:1px;background:#b0b0b0;"></div>
<div style="left:1px;top:413px;width:28px;height:1px;background:#b0b0b0;"></div>
<div style="left:1px;top:434px;width:28px;height:1px;background:#b0b0b0;"></div>
<div style="left:1px;top:455px;width:28px;height:1px;background:#b0b0b0;"></div>
<div style="left:1px;top:476px;width:28px;height:1px;background:#b0b0b0;"></div>
<div style="left:1px;top:497px;width:28px;height:1px;background:#b0b0b0;"></div>
<div style="left:1px;top:518px;width:28px;height:1px;background:#b0b0b0;"></div>
<div style="left:1px;top:539px;width:28px;height:1px;background:#b0b0b0;"></div>
<div style="left:1px;top:560px;width:28px;height:1px;background:#b0b0b0;"></div>
<div style="left:1px;top:581px;width:28px;height:1px;background:#b0b0b0;"></div>
<div style="left:1px;top:602px;width:28px;height:1px;background:#b0b0b0;"></div>
<div style="left:1px;top:623px;width:28px;height:1px;background:#b0b0b0;"></div>
<div style="left:1px;top:644px;width:28px;height:1px;background:#b0b0b0;"></div>
<div style="left:1px;top:665px;width:28px;height:1px;background:#b0b0b0;"></div>
<div style="left:317px;top:225px;width:1px;height:440px;background:#d4d4d4;"></div>
<div style="left:417px;top:225px;width:1px;height:440px;background:#d4d4d4;"></div>
<div style="left:525px;top:225px;width:1px;height:440px;background:#d4d4d4;"></div>
<div style="left:626px;top:225px;width:1px;height:440px;background:#d4d4d4;"></div>
<div style="left:706px;top:225px;width:1px;height:440px;background:#d4d4d4;"></div>
<div style="left:778px;top:225px;width:1px;height:440px;background:#d4d4d4;"></div>
<div style="left:850px;top:225px;width:1px;height:440px;background:#d4d4d4;"></div>
<div style="left:922px;top:225px;width:1px;height:440px;background:#d4d4d4;"></div>
<div style="left:994px;top:225px;width:1px;height:440px;background:#d4d4d4;"></div>
<div style="left:30px;top:245px;width:975px;height:1px;background:#d4d4d4;"></div>
<div style="left:30px;top:266px;width:975px;height:1px;background:#d4d4d4;"></div>
<div style="left:30px;top:287px;width:975px;height:1px;background:#d4d4d4;"></div>
<div style="left:30px;top:308px;width:975px;height:1px;background:#d4d4d4;"></div>
<div style="left:30px;top:329px;width:975px;height:1px;background:#d4d4d4;"></div>
<div style="left:30px;top:350px;width:975px;height:1px;background:#d4d4d4;"></div>
<div style="left:30px;top:371px;width:975px;height:1px;background:#d4d4d4;"></div>
<div style="left:30px;top:392px;width:975px;height:1px;background:#d4d4d4;"></div>
<div style="left:30px;top:413px;width:975px;height:1px;background:#d4d4d4;"></div>
<div style="left:30px;top:434px;width:975px;height:1px;background:#d4d4d4;"></div>
<div style="left:30px;top:455px;width:975px;height:1px;background:#d4d4d4;"></div>
<div style="left:30px;top:476px;width:975px;height:1px;background:#d4d4d4;"></div>
<div style="left:30px;top:497px;width:975px;height:1px;background:#d4d4d4;"></div>
<div style="left:30px;top:518px;width:975px;height:1px;background:#d4d4d4;"></div>
<div style="left:30px;top:539px;width:975px;height:1px;background:#d4d4d4;"></div>
<div style="left:30px;top:560px;width:975px;height:1px;background:#d4d4d4;"></div>
<div style="left:30px;top:581px;width:975px;height:1px;background:#d4d4d4;"></div>
<div style="left:30px;top:602px;width:975px;height:1px;background:#d4d4d4;"></div>
<div style="left:30px;top:623px;width:975px;height:1px;background:#d4d4d4;"></div>
<div style="left:30px;top:644px;width:975px;height:1px;background:#d4d4d4;"></div>
<div style="left:1px;top:665px;width:1005px;height:1px;background:#cfcfcf;"></div>
<div style="left:1px;top:666px;width:1005px;height:1px;background:#a9a9a9;"></div>
<div style="left:1005px;top:225px;width:1px;height:442px;background:#a9a9a9;"></div>
<svg style="left:13px;top:208px" width="14" height="14" viewBox="0 0 14 14"><path d="M13 0.800V13H0.800z" fill="#b4b4b4"/></svg>
<div style="left:30px;top:225px;width:676px;height:20px;background:#00b050;"></div>
<div style="left:30px;top:246px;width:287px;height:188px;background:#ffe699;"></div>
<div style="left:317px;top:225px;width:1px;height:210px;background:#000;"></div>
<div style="left:417px;top:225px;width:1px;height:210px;background:#000;"></div>
<div style="left:525px;top:225px;width:1px;height:210px;background:#000;"></div>
<div style="left:626px;top:225px;width:1px;height:210px;background:#000;"></div>
<div style="left:706px;top:225px;width:1px;height:210px;background:#000;"></div>
<div style="left:30px;top:245px;width:677px;height:1px;background:#000;"></div>
<div style="left:30px;top:266px;width:677px;height:1px;background:#000;"></div>
<div style="left:30px;top:287px;width:677px;height:1px;background:#000;"></div>
<div style="left:30px;top:308px;width:677px;height:1px;background:#000;"></div>
<div style="left:30px;top:329px;width:677px;height:1px;background:#000;"></div>
<div style="left:30px;top:350px;width:677px;height:1px;background:#000;"></div>
<div style="left:30px;top:371px;width:677px;height:1px;background:#000;"></div>
<div style="left:30px;top:392px;width:677px;height:1px;background:#000;"></div>
<div style="left:30px;top:413px;width:677px;height:1px;background:#000;"></div>
<div style="left:30px;top:434px;width:677px;height:1px;background:#000;"></div>
<div style="left:28px;top:223px;width:287px;height:20px;border:2px solid #0f7a43;box-shadow:inset 0 0 0 1px #fff"></div>
<div style="left:314px;top:242px;width:6px;height:6px;background:#fff;"></div>
<div style="left:315px;top:243px;width:5px;height:5px;background:#0f7a43;"></div>
<span class="t" style="left:170.66px;top:207px;font-size:14.5px;line-height:16px;height:16px;color:#0f7a43;transform:scaleX(1.0300);">1</span>
<span class="t" style="left:363.66px;top:207px;font-size:14.5px;line-height:16px;height:16px;color:#262626;transform:scaleX(1.0300);">2</span>
<span class="t" style="left:467.66px;top:207px;font-size:14.5px;line-height:16px;height:16px;color:#262626;transform:scaleX(1.0300);">3</span>
<span class="t" style="left:572.16px;top:207px;font-size:14.5px;line-height:16px;height:16px;color:#262626;transform:scaleX(1.0300);">4</span>
<span class="t" style="left:662.66px;top:207px;font-size:14.5px;line-height:16px;height:16px;color:#262626;transform:scaleX(1.0300);">5</span>
<span class="t" style="left:738.66px;top:207px;font-size:14.5px;line-height:16px;height:16px;color:#262626;transform:scaleX(1.0300);">6</span>
<span class="t" style="left:810.66px;top:207px;font-size:14.5px;line-height:16px;height:16px;color:#262626;transform:scaleX(1.0300);">7</span>
<span class="t" style="left:882.66px;top:207px;font-size:14.5px;line-height:16px;height:16px;color:#262626;transform:scaleX(1.0300);">8</span>
<span class="t" style="left:954.66px;top:207px;font-size:14.5px;line-height:16px;height:16px;color:#262626;transform:scaleX(1.0300);">9</span>
<span class="t" style="left:10.86px;top:228px;font-size:14.5px;line-height:16px;height:16px;color:#0f7a43;transform:scaleX(1.0300);">1</span>
<span class="t" style="left:10.86px;top:249px;font-size:14.5px;line-height:16px;height:16px;color:#262626;transform:scaleX(1.0300);">2</span>
<span class="t" style="left:10.86px;top:270px;font-size:14.5px;line-height:16px;height:16px;color:#262626;transform:scaleX(1.0300);">3</span>
<span class="t" style="left:10.86px;top:291px;font-size:14.5px;line-height:16px;height:16px;color:#262626;transform:scaleX(1.0300);">4</span>
<span class="t" style="left:10.86px;top:312px;font-size:14.5px;line-height:16px;height:16px;color:#262626;transform:scaleX(1.0300);">5</span>
<span class="t" style="left:10.86px;top:333px;font-size:14.5px;line-height:16px;height:16px;color:#262626;transform:scaleX(1.0300);">6</span>
<span class="t" style="left:10.86px;top:354px;font-size:14.5px;line-height:16px;height:16px;color:#262626;transform:scaleX(1.0300);">7</span>
<span class="t" style="left:10.86px;top:375px;font-size:14.5px;line-height:16px;height:16px;color:#262626;transform:scaleX(1.0300);">8</span>
<span class="t" style="left:10.86px;top:396px;font-size:14.5px;line-height:16px;height:16px;color:#262626;transform:scaleX(1.0300);">9</span>
<span class="t" style="left:6.71px;top:417px;font-size:14.5px;line-height:16px;height:16px;color:#262626;transform:scaleX(1.0300);">10</span>
<span class="t" style="left:7.23px;top:438px;font-size:14.5px;line-height:16px;height:16px;color:#262626;transform:scaleX(1.0300);">11</span>
<span class="t" style="left:6.71px;top:459px;font-size:14.5px;line-height:16px;height:16px;color:#262626;transform:scaleX(1.0300);">12</span>
<span class="t" style="left:6.71px;top:480px;font-size:14.5px;line-height:16px;height:16px;color:#262626;transform:scaleX(1.0300);">13</span>
<span class="t" style="left:6.71px;top:501px;font-size:14.5px;line-height:16px;height:16px;color:#262626;transform:scaleX(1.0300);">14</span>
<span class="t" style="left:6.71px;top:522px;font-size:14.5px;line-height:16px;height:16px;color:#262626;transform:scaleX(1.0300);">15</span>
<span class="t" style="left:6.71px;top:543px;font-size:14.5px;line-height:16px;height:16px;color:#262626;transform:scaleX(1.0300);">16</span>
<span class="t" style="left:6.71px;top:564px;font-size:14.5px;line-height:16px;height:16px;color:#262626;transform:scaleX(1.0300);">17</span>
<span class="t" style="left:6.71px;top:585px;font-size:14.5px;line-height:16px;height:16px;color:#262626;transform:scaleX(1.0300);">18</span>
<span class="t" style="left:6.71px;top:606px;font-size:14.5px;line-height:16px;height:16px;color:#262626;transform:scaleX(1.0300);">19</span>
<span class="t" style="left:6.71px;top:627px;font-size:14.5px;line-height:16px;height:16px;color:#262626;transform:scaleX(1.0300);">20</span>
<span class="t" style="left:6.71px;top:648px;font-size:14.5px;line-height:16px;height:16px;color:#262626;transform:scaleX(1.0300);">21</span>
<span class="t" style="left:32.40px;top:228px;font-size:14.5px;line-height:16px;height:16px;color:#000;transform:scaleX(0.9863);font-weight:bold;">Наименование</span>
<span class="t" style="left:354.70px;top:228px;font-size:14.5px;line-height:16px;height:16px;color:#000;transform:scaleX(0.9101);font-weight:bold;">Пол</span>
<span class="t" style="left:426.10px;top:228px;font-size:14.5px;line-height:16px;height:16px;color:#000;transform:scaleX(0.9860);font-weight:bold;">Продано, шт.</span>
<span class="t" style="left:540.00px;top:228px;font-size:14.5px;line-height:16px;height:16px;color:#000;transform:scaleX(0.9844);font-weight:bold;">Цена, руб.</span>
<span class="t" style="left:647.80px;top:228px;font-size:14.5px;line-height:16px;height:16px;color:#000;transform:scaleX(0.9416);font-weight:bold;">Итого</span>
<span class="t" style="left:32.40px;top:249px;font-size:14.5px;line-height:16px;height:16px;color:#000;transform:scaleX(1.0198);">Кроссовки беговые, размер 35</span>
<span class="t" style="left:338.50px;top:249px;font-size:14.5px;line-height:16px;height:16px;color:#000;transform:scaleX(1.0534);">женский</span>
<span class="t" style="left:499.30px;top:249px;font-size:14.5px;line-height:16px;height:16px;color:#000;transform:scaleX(0.9705);">221</span>
<span class="t" style="left:588.00px;top:249px;font-size:14.5px;line-height:16px;height:16px;color:#000;transform:scaleX(0.9856);">3 190</span>
<span class="t" style="left:651.80px;top:249px;font-size:14.5px;line-height:16px;height:16px;color:#000;transform:scaleX(0.9920);">704 990</span>
<span class="t" style="left:32.40px;top:270px;font-size:14.5px;line-height:16px;height:16px;color:#000;transform:scaleX(1.0198);">Кроссовки беговые, размер 39</span>
<span class="t" style="left:339.20px;top:270px;font-size:14.5px;line-height:16px;height:16px;color:#000;transform:scaleX(1.0104);">мужской</span>
<span class="t" style="left:499.30px;top:270px;font-size:14.5px;line-height:16px;height:16px;color:#000;transform:scaleX(0.9705);">400</span>
<span class="t" style="left:588.00px;top:270px;font-size:14.5px;line-height:16px;height:16px;color:#000;transform:scaleX(0.9856);">6 990</span>
<span class="t" style="left:639.50px;top:270px;font-size:14.5px;line-height:16px;height:16px;color:#000;transform:scaleX(0.9965);">2 796 000</span>
<span class="t" style="left:32.40px;top:291px;font-size:14.5px;line-height:16px;height:16px;color:#000;transform:scaleX(1.0130);">Кроссовки для баскетбола, размер 39</span>
<span class="t" style="left:338.50px;top:291px;font-size:14.5px;line-height:16px;height:16px;color:#000;transform:scaleX(1.0534);">женский</span>
<span class="t" style="left:507.40px;top:291px;font-size:14.5px;line-height:16px;height:16px;color:#000;transform:scaleX(0.9568);">98</span>
<span class="t" style="left:588.00px;top:291px;font-size:14.5px;line-height:16px;height:16px;color:#000;transform:scaleX(0.9856);">5 990</span>
<span class="t" style="left:651.80px;top:291px;font-size:14.5px;line-height:16px;height:16px;color:#000;transform:scaleX(0.9920);">587 020</span>
<span class="t" style="left:32.40px;top:312px;font-size:14.5px;line-height:16px;height:16px;color:#000;transform:scaleX(1.0130);">Кроссовки для баскетбола, размер 43</span>
<span class="t" style="left:339.20px;top:312px;font-size:14.5px;line-height:16px;height:16px;color:#000;transform:scaleX(1.0104);">мужской</span>
<span class="t" style="left:499.30px;top:312px;font-size:14.5px;line-height:16px;height:16px;color:#000;transform:scaleX(0.9705);">334</span>
<span class="t" style="left:588.00px;top:312px;font-size:14.5px;line-height:16px;height:16px;color:#000;transform:scaleX(0.9856);">5 890</span>
<span class="t" style="left:639.50px;top:312px;font-size:14.5px;line-height:16px;height:16px;color:#000;transform:scaleX(0.9965);">1 967 260</span>
<span class="t" style="left:32.40px;top:333px;font-size:14.5px;line-height:16px;height:16px;color:#000;transform:scaleX(1.0198);">Кроссовки беговые, размер 40</span>
<span class="t" style="left:338.50px;top:333px;font-size:14.5px;line-height:16px;height:16px;color:#000;transform:scaleX(1.0534);">женский</span>
<span class="t" style="left:499.30px;top:333px;font-size:14.5px;line-height:16px;height:16px;color:#000;transform:scaleX(0.9705);">321</span>
<span class="t" style="left:588.00px;top:333px;font-size:14.5px;line-height:16px;height:16px;color:#000;transform:scaleX(0.9856);">6 490</span>
<span class="t" style="left:639.50px;top:333px;font-size:14.5px;line-height:16px;height:16px;color:#000;transform:scaleX(0.9965);">2 083 290</span>
<span class="t" style="left:32.40px;top:354px;font-size:14.5px;line-height:16px;height:16px;color:#000;transform:scaleX(1.0198);">Кроссовки беговые, размер 40</span>
<span class="t" style="left:339.20px;top:354px;font-size:14.5px;line-height:16px;height:16px;color:#000;transform:scaleX(1.0104);">мужской</span>
<span class="t" style="left:499.30px;top:354px;font-size:14.5px;line-height:16px;height:16px;color:#000;transform:scaleX(0.9705);">500</span>
<span class="t" style="left:588.00px;top:354px;font-size:14.5px;line-height:16px;height:16px;color:#000;transform:scaleX(0.9856);">6 990</span>
<span class="t" style="left:639.50px;top:354px;font-size:14.5px;line-height:16px;height:16px;color:#000;transform:scaleX(0.9965);">3 495 000</span>
<span class="t" style="left:32.40px;top:375px;font-size:14.5px;line-height:16px;height:16px;color:#000;transform:scaleX(1.0198);">Кроссовки беговые, размер 41</span>
<span class="t" style="left:339.20px;top:375px;font-size:14.5px;line-height:16px;height:16px;color:#000;transform:scaleX(1.0104);">мужской</span>
<span class="t" style="left:499.30px;top:375px;font-size:14.5px;line-height:16px;height:16px;color:#000;transform:scaleX(0.9705);">664</span>
<span class="t" style="left:588.00px;top:375px;font-size:14.5px;line-height:16px;height:16px;color:#000;transform:scaleX(0.9856);">6 990</span>
<span class="t" style="left:639.50px;top:375px;font-size:14.5px;line-height:16px;height:16px;color:#000;transform:scaleX(0.9965);">4 641 360</span>
<span class="t" style="left:32.40px;top:396px;font-size:14.5px;line-height:16px;height:16px;color:#000;transform:scaleX(1.0225);">Кроссовки теннисные, размер 41</span>
<span class="t" style="left:339.20px;top:396px;font-size:14.5px;line-height:16px;height:16px;color:#000;transform:scaleX(1.0104);">мужской</span>
<span class="t" style="left:499.30px;top:396px;font-size:14.5px;line-height:16px;height:16px;color:#000;transform:scaleX(0.9705);">553</span>
<span class="t" style="left:588.00px;top:396px;font-size:14.5px;line-height:16px;height:16px;color:#000;transform:scaleX(0.9856);">7 990</span>
<span class="t" style="left:639.50px;top:396px;font-size:14.5px;line-height:16px;height:16px;color:#000;transform:scaleX(0.9965);">4 418 470</span>
<span class="t" style="left:32.40px;top:417px;font-size:14.5px;line-height:16px;height:16px;color:#000;transform:scaleX(1.0225);">Кроссовки теннисные, размер 42</span>
<span class="t" style="left:339.20px;top:417px;font-size:14.5px;line-height:16px;height:16px;color:#000;transform:scaleX(1.0104);">мужской</span>
<span class="t" style="left:499.30px;top:417px;font-size:14.5px;line-height:16px;height:16px;color:#000;transform:scaleX(0.9705);">123</span>
<span class="t" style="left:588.00px;top:417px;font-size:14.5px;line-height:16px;height:16px;color:#000;transform:scaleX(0.9856);">7 990</span>
<span class="t" style="left:651.80px;top:417px;font-size:14.5px;line-height:16px;height:16px;color:#000;transform:scaleX(0.9920);">982 770</span>
<div style="left:1009px;top:221px;width:15px;height:431px;background:#d4d4d4;"></div>
<div style="left:1009px;top:206px;width:13px;height:13px;background:#fff;border:1px solid #ababab"></div>
<svg style="left:1012.5px;top:211px" width="8" height="5" viewBox="0 0 8 5"><path d="M0 4.500h8L4 0.300z" fill="#777"/></svg>
<div style="left:1009px;top:221px;width:13px;height:407px;background:#fff;border:1px solid #ababab"></div>
<div style="left:1009px;top:652px;width:13px;height:13px;background:#fff;border:1px solid #ababab"></div>
<svg style="left:1012.5px;top:658px" width="8" height="5" viewBox="0 0 8 5"><path d="M0 0.300h8L4 4.500z" fill="#777"/></svg>
<svg style="left:27px;top:674px" width="6" height="11" viewBox="0 0 6 11"><path d="M5.200 0.800V10L0.600 5.400z" fill="#c2c2c2"/></svg>
<svg style="left:56px;top:674px" width="6" height="11" viewBox="0 0 6 11"><path d="M0.800 0.800V10L5.400 5.400z" fill="#c2c2c2"/></svg>
<div style="left:102px;top:666px;width:105px;height:23px;background:#fff;"></div>
<div style="left:101px;top:666px;width:1px;height:23px;background:#a6a6a6;"></div>
<div style="left:207px;top:666px;width:1px;height:23px;background:#c4c4c4;"></div>
<div style="left:101px;top:689px;width:107px;height:2px;background:#0f7a43;"></div>
<span class="t" style="left:113.10px;top:673px;font-size:12.5px;line-height:14px;height:14px;color:#0f7a43;transform:scaleX(1.0171);font-weight:bold;">microexcel.ru</span>
<svg style="left:240px;top:671px" width="18" height="18" viewBox="0 0 18 18"><circle cx="8.900" cy="9" r="7.500" fill="none" stroke="#777" stroke-width="1"/><path d="M8.900 5v8M4.900 9h8" stroke="#666" stroke-width="1.500"/></svg>
<div style="left:616px;top:675px;width:2px;height:2px;background:#b5b5b5;"></div>
<div style="left:616px;top:679px;width:2px;height:2px;background:#b5b5b5;"></div>
<div style="left:616px;top:683px;width:2px;height:2px;background:#b5b5b5;"></div>
<div style="left:633px;top:673px;width:373px;height:15px;background:#d4d4d4;"></div>
<div style="left:633px;top:673px;width:13px;height:13px;background:#fff;border:1px solid #ababab"></div>
<svg style="left:638px;top:676px" width="5" height="9" viewBox="0 0 5 9"><path d="M4.500 0.300V8.700L0.300 4.500z" fill="#777"/></svg>
<div style="left:648px;top:673px;width:302px;height:13px;background:#fff;border:1px solid #ababab"></div>
<div style="left:991px;top:673px;width:13px;height:13px;background:#fff;border:1px solid #ababab"></div>
<svg style="left:996px;top:676px" width="5" height="9" viewBox="0 0 5 9"><path d="M0.500 0.300V8.700L4.700 4.500z" fill="#777"/></svg>
<div style="left:1px;top:694px;width:1026px;height:1px;background:#d0d0d0;"></div>
<div style="left:1px;top:695px;width:1026px;height:21px;background:#f3f3f3;"></div>
<svg style="left:8px;top:697px" width="15" height="15" viewBox="0 0 15 15"><path d="M2.500 3.500h11v10h-11z" fill="#fff" stroke="#6a6a6a" stroke-width="1"/><path d="M7 3h7v2.200h-7z" fill="#6a6a6a"/>
<path d="M4.200 7.500h2.200M7.400 7.500h2.200M10.600 7.500h2M4.200 9.500h2.200M7.400 9.500h2.200M10.600 9.500h2M4.200 11.500h2.200M7.400 11.500h2.200M10.600 11.500h2" stroke="#6a6a6a" stroke-width="1"/>
<circle cx="3.900" cy="3.900" r="3.200" fill="#6a6a6a" stroke="#f3f3f3" stroke-width=".6"/></svg>
<div style="left:727px;top:695px;width:38px;height:21px;background:#c8c8c8;"></div>
<svg style="left:739px;top:698px" width="13" height="13" viewBox="0 0 13 13"><path d="M0 0h13v13h-13z" fill="#6e6e6e"/><path d="M1.5 1.5h2.600v2.600h-2.600z" fill="#d9d9d9"/><path d="M1.5 5.5h2.600v2.600h-2.600z" fill="#d9d9d9"/><path d="M1.5 9.5h2.600v2.600h-2.600z" fill="#d9d9d9"/><path d="M5.5 1.5h2.600v2.600h-2.600z" fill="#d9d9d9"/><path d="M5.5 5.5h2.600v2.600h-2.600z" fill="#d9d9d9"/><path d="M5.5 9.5h2.600v2.600h-2.600z" fill="#d9d9d9"/><path d="M9.5 1.5h2.600v2.600h-2.600z" fill="#d9d9d9"/><path d="M9.5 5.5h2.600v2.600h-2.600z" fill="#d9d9d9"/><path d="M9.5 9.5h2.600v2.600h-2.600z" fill="#d9d9d9"/></svg>
<svg style="left:777px;top:698px" width="14" height="13" viewBox="0 0 14 13"><path d="M0.600 0.600h12.600v11.800h-12.600z" fill="none" stroke="#6e6e6e" stroke-width="1.200"/><path d="M3.500 3.300h6.800v6.400h-6.800z" fill="none" stroke="#6e6e6e" stroke-width="1"/><path d="M5 5.300h3.800M5 7.600h3.800" stroke="#6e6e6e" stroke-width="1"/></svg>
<svg style="left:815px;top:698px" width="14" height="13" viewBox="0 0 14 13"><path d="M0.600 0.600h12.600v11.800h-12.600z" fill="none" stroke="#6e6e6e" stroke-width="1.200"/><path d="M4.500 0.600v6.400M8.300 0.600v6.400M0.600 7h7.700" fill="none" stroke="#6e6e6e" stroke-width="1.100"/></svg>
<div style="left:846px;top:704px;width:6px;height:2px;background:#5f5f5f;"></div>
<div style="left:857px;top:705px;width:99px;height:1px;background:#a8a8a8;"></div>
<div style="left:904px;top:699px;width:5px;height:11px;background:#6e6e6e;"></div>
<div style="left:959px;top:704px;width:8px;height:2px;background:#5f5f5f;"></div>
<div style="left:962px;top:701px;width:2px;height:8px;background:#5f5f5f;"></div>
<span class="t" style="left:978.80px;top:698px;font-size:11.5px;line-height:12px;height:12px;color:#3b3b3b;transform:scaleX(0.8926);">100 %</span>
</div></body></html>
